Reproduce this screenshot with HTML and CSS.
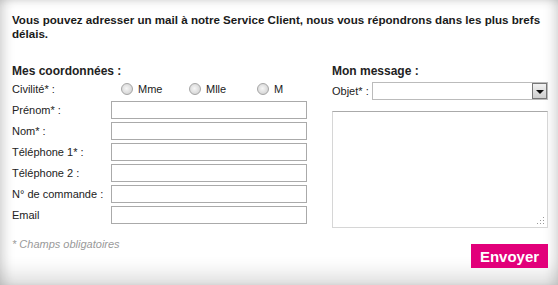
FILE: index.html
```html
<!DOCTYPE html>
<html lang="fr">
<head>
    <meta charset="UTF-8">
    <meta name="viewport" content="width=device-width, initial-scale=1.0">
    <title>Contact</title>
    <link rel="stylesheet" href="styles.css">
</head>
<body>
    <div class="page">
        <p class="intro">Vous pouvez adresser un mail à notre Service Client, nous vous répondrons dans les plus brefs délais.</p>
        <form class="columns" method="POST" action="/contact">
            <!-- coordonnées -->
            <div class="col-left">
                <h2>Mes coordonnées :</h2>
                <div class="row">
                    <label>Civilité* :</label>
                    <div class="radios">
                        <label class="radio"><input type="radio" name="civilite" value="Mme"> Mme</label>
                        <label class="radio"><input type="radio" name="civilite" value="Mlle"> Mlle</label>
                        <label class="radio"><input type="radio" name="civilite" value="M"> M</label>
                    </div>
                </div>
                <div class="row">
                    <label for="prenom">Prénom* :</label>
                    <input type="text" id="prenom" name="prenom">
                </div>
                <div class="row">
                    <label for="nom">Nom* :</label>
                    <input type="text" id="nom" name="nom">
                </div>
                <div class="row">
                    <label for="tel1">Téléphone 1* :</label>
                    <input type="text" id="tel1" name="tel1">
                </div>
                <div class="row">
                    <label for="tel2">Téléphone 2 :</label>
                    <input type="text" id="tel2" name="tel2">
                </div>
                <div class="row">
                    <label for="commande">N° de commande :</label>
                    <input type="text" id="commande" name="commande">
                </div>
                <div class="row">
                    <label for="email">Email</label>
                    <input type="text" id="email" name="email">
                </div>
                <p class="note">* Champs obligatoires</p>
            </div>
            <!-- message -->
            <div class="col-right">
                <h2>Mon message :</h2>
                <div class="row objet-row">
                    <label for="objet">Objet* :</label>
                    <div class="select">
                        <span class="select-value"></span>
                        <span class="select-arrow"></span>
                    </div>
                </div>
                <div class="message">
                    <textarea id="message" name="message"></textarea>
                    <svg class="grip" width="8" height="8" viewBox="0 0 8 8">
                        <rect x="6" y="0" width="1" height="1" fill="#999"/>
                        <rect x="6" y="3" width="1" height="1" fill="#999"/>
                        <rect x="6" y="6" width="1" height="1" fill="#999"/>
                        <rect x="3" y="3" width="1" height="1" fill="#999"/>
                        <rect x="3" y="6" width="1" height="1" fill="#999"/>
                        <rect x="0" y="6" width="1" height="1" fill="#999"/>
                    </svg>
                </div>
                <div class="actions">
                    <button type="submit" class="btn">Envoyer</button>
                </div>
            </div>
        </form>
    </div>
</body>
</html>
```

FILE: styles.css
```css
html, body {
    margin: 0;
    height: 100%;
}
body {
    font-family: "Liberation Sans", Arial, sans-serif;
    font-size: 11px;
    color: #222;
    background: #fff;
    box-shadow: inset 10px 0 12px -6px rgba(0, 0, 0, 0.16),
                inset -10px 0 12px -6px rgba(0, 0, 0, 0.14),
                inset 0 8px 10px -6px rgba(0, 0, 0, 0.1),
                inset 0 -22px 20px -12px rgba(0, 0, 0, 0.14);
    overflow: hidden;
}
.page {
    padding: 13px 10px 0 12px;
}
.intro {
    margin: 0;
    font-size: 11.6px;
    font-weight: bold;
    line-height: 14px;
    color: #1a1a1a;
}
.columns {
    display: flex;
    gap: 25px;
    margin-top: 23px;
}
h2 {
    margin: 0 0 2px;
    font-size: 12px;
    line-height: 14px;
    font-weight: bold;
    color: #222;
}
.col-left {
    width: 295px;
}
.col-right {
    flex: 1;
}
.row {
    display: flex;
    align-items: center;
    height: 18px;
    margin-bottom: 3px;
}
.row > label {
    width: 99px;
    flex-shrink: 0;
}
.row input[type="text"] {
    width: 196px;
    height: 18px;
    box-sizing: border-box;
    border: 1px solid #aaa;
    margin: 0;
    padding: 1px 3px;
    font: inherit;
}
.radios {
    display: flex;
    padding-left: 10px;
}
.radio {
    display: flex;
    align-items: center;
    width: 68px;
}
.radio input {
    appearance: none;
    -webkit-appearance: none;
    width: 12px;
    height: 12px;
    margin: 0 5px 0 0;
    border-radius: 50%;
    border: 1px solid #a5a5a5;
    background: radial-gradient(circle at 45% 45%, #f6f6f6 0, #dcdcdc 60%, #c4c4c4 100%);
    box-sizing: border-box;
}
.note {
    margin: 14px 0 0;
    font-style: italic;
    color: #999;
    line-height: 13px;
}
.objet-row {
    margin-top: 4px;
}
.objet-row > label {
    width: 40px;
}
.select {
    display: flex;
    width: 176px;
    height: 18px;
    box-sizing: border-box;
    border: 1px solid #bbb;
    background: #fff;
}
.select-value {
    flex: 1;
}
.select-arrow {
    width: 15px;
    margin: 0;
    box-sizing: border-box;
    border: 1px solid #777;
    background: linear-gradient(#f2f2f2, #cfcfcf);
    position: relative;
}
.select-arrow::after {
    content: "";
    position: absolute;
    left: 3px;
    top: 6px;
    border-left: 4px solid transparent;
    border-right: 4px solid transparent;
    border-top: 4px solid #111;
}
.message {
    position: relative;
    margin-top: 11px;
}
.message textarea {
    display: block;
    width: 216px;
    height: 117px;
    box-sizing: border-box;
    margin: 0;
    border: 1px solid #d6d6d6;
    border-top-color: #aaa;
    resize: none;
}
.grip {
    position: absolute;
    right: 3px;
    bottom: 3px;
}
.actions {
    display: flex;
    justify-content: flex-end;
    margin-top: 16px;
}
.btn {
    width: 77px;
    height: 24px;
    padding: 0;
    border: none;
    background-color: #e2007a;
    color: #fff;
    font-family: "Liberation Sans", Arial, sans-serif;
    font-size: 15px;
    font-weight: bold;
    cursor: pointer;
}
```
